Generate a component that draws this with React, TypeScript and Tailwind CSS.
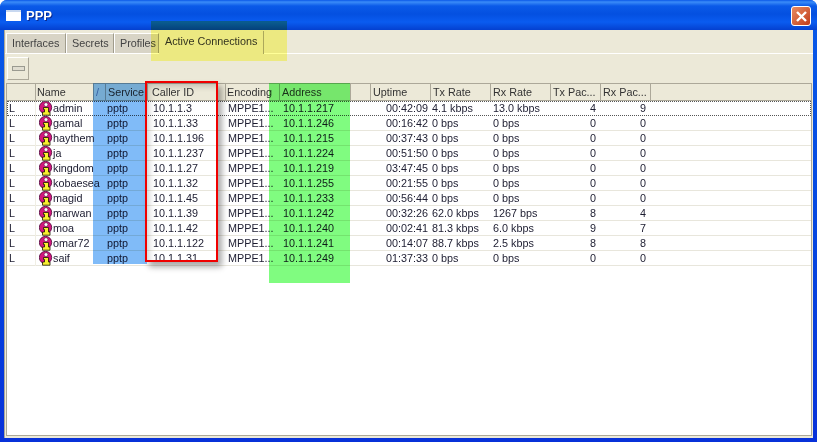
const rows = [
  ['admin', '10.1.1.3', '10.1.1.217', '00:42:09', '4.1 kbps', '13.0 kbps', '4', '9'],
  ['gamal', '10.1.1.33', '10.1.1.246', '00:16:42', '0 bps', '0 bps', '0', '0'],
  ['haythem', '10.1.1.196', '10.1.1.215', '00:37:43', '0 bps', '0 bps', '0', '0'],
  ['ja', '10.1.1.237', '10.1.1.224', '00:51:50', '0 bps', '0 bps', '0', '0'],
  ['kingdom', '10.1.1.27', '10.1.1.219', '03:47:45', '0 bps', '0 bps', '0', '0'],
  ['kobaesea', '10.1.1.32', '10.1.1.255', '00:21:55', '0 bps', '0 bps', '0', '0'],
  ['magid', '10.1.1.45', '10.1.1.233', '00:56:44', '0 bps', '0 bps', '0', '0'],
  ['marwan', '10.1.1.39', '10.1.1.242', '00:32:26', '62.0 kbps', '1267 bps', '8', '4'],
  ['moa', '10.1.1.42', '10.1.1.240', '00:02:41', '81.3 kbps', '6.0 kbps', '9', '7'],
  ['omar72', '10.1.1.122', '10.1.1.241', '00:14:07', '88.7 kbps', '2.5 kbps', '8', '8'],
  ['saif', '10.1.1.31', '10.1.1.249', '01:37:33', '0 bps', '0 bps', '0', '0'],
];

const gridCols = 'grid grid-cols-[29px_58px_12px_42px_78px_54px_71px_20px_60px_60px_60px_50px_50px_1fr]';

const headers = [
  { label: '', pad: 'pl-[2px]' },
  { label: 'Name', pad: 'pl-[1px]' },
  { label: '/', pad: 'pl-[2px] text-[#6a84a8]' },
  { label: 'Service', pad: 'pl-[2px]' },
  { label: 'Caller ID', pad: 'pl-[4px]' },
  { label: 'Encoding', pad: 'pl-[1px]' },
  { label: 'Address', pad: 'pl-[2px]' },
  { label: '', pad: 'pl-[2px]' },
  { label: 'Uptime', pad: 'pl-[2px]' },
  { label: 'Tx Rate', pad: 'pl-[2px]' },
  { label: 'Rx Rate', pad: 'pl-[2px]' },
  { label: 'Tx Pac...', pad: 'pl-[2px]' },
  { label: 'Rx Pac...', pad: 'pl-[2px]' },
  { label: '', pad: 'pl-[2px]' },
];

function UserIcon() {
  return (
    <svg width="14" height="15" viewBox="0 0 14 15" className="shrink-0">
      <circle cx="6.5" cy="6.5" r="6.2" fill="#d4157e" stroke="#4a0a38" strokeWidth="0.8" />
      <circle cx="7" cy="3.6" r="1.9" fill="#fff" stroke="#4a0a38" strokeWidth="0.5" />
      <path d="M4.5 6.5 H9.5 V11 H11 V14.2 H3.5 V11 H5.5 V8.5 H4.5 Z" fill="#f8ee30" stroke="#1a1400" strokeWidth="0.8" />
    </svg>
  );
}

function Tab({ label, width, active }: { label: string; width: string; active?: boolean }) {
  if (active) {
    return (
      <div className={`${width} h-[23px] mt-[1px] pl-[6px] pt-[3px] text-[#333] bg-[#ece9d8] border-r border-[#aca899]`}>{label}</div>
    );
  }
  return (
    <div className={`${width} h-[20px] mt-[3px] pl-[5px] pt-[2px] text-[#444] bg-[#d8d4c6] border-r border-[#a09c8c] border-l border-l-white border-t border-t-white`}>{label}</div>
  );
}

export default function App() {
  return (
    <div className="relative w-[817px] h-[442px] overflow-hidden bg-white text-[10.8px] leading-[15px] text-[#1c1c30] font-['Liberation_Sans',sans-serif]">
      <div className="w-full h-full flex flex-col rounded-t-[7px] bg-gradient-to-b from-[#0a5ae8] to-[#0831d9]">
        {/* title bar */}
        <div className="h-[30px] shrink-0 flex items-center pl-[6px] pr-[6px] rounded-t-[7px] bg-[linear-gradient(to_bottom,#0a58e8_0px,#3a8cf8_2px,#0a5ae8_6px,#0450e0_14px,#0a5cf0_22px,#0440d0_30px)]">
          <div className="w-[15px] h-[11px] bg-white border-t-2 border-[#c8d8f0]" />
          <span className="ml-[5px] text-[13px] font-bold text-white [text-shadow:1px_1px_#0a2a90]">PPP</span>
          <div className="ml-auto mt-[2px] w-[20px] h-[20px] rounded-[3px] border border-white bg-gradient-to-br from-[#e88a60] to-[#c03a18] flex items-center justify-center">
            <svg width="13" height="13" viewBox="0 0 13 13">
              <path d="M2 2 L11 11 M11 2 L2 11" stroke="#fff" strokeWidth="2.4" />
            </svg>
          </div>
        </div>

        {/* body */}
        <div className="flex-1 min-h-0 mx-[4px] mb-[4px] pb-[2px] flex flex-col bg-[#ece9d8] border-l border-[#aca899]">
          {/* tabs */}
          <div className="h-[24px] shrink-0 flex pl-[1px] items-start border-b border-white">
            <Tab label="Interfaces" width="w-[60px]" />
            <Tab label="Secrets" width="w-[48px]" />
            <Tab label="Profiles" width="w-[45px]" />
            <Tab label="Active Connections" width="w-[105px]" active />
          </div>
          {/* toolbar */}
          <div className="h-[29px] shrink-0 flex items-start pl-[2px] pt-[3px]">
            <div className="w-[22px] h-[23px] border border-t-white border-l-white border-r-[#aca899] border-b-[#aca899] flex items-center justify-center">
              <div className="w-[13px] h-[5px] bg-[#e0ddd0] border border-[#9a9a90]" />
            </div>
          </div>
          {/* list */}
          <div className="flex-1 min-h-0 mx-[1px] flex flex-col bg-white border border-[#aca899]">
            <div className={`${gridCols} h-[17px] shrink-0 bg-[#ece9d8] text-[#333] border-b border-[#aca899]`}>
              {headers.map((h, i) => (
                <div key={i} className={`${h.pad} pt-[1px] border-r border-[#aca899] overflow-hidden whitespace-nowrap last:border-r-0`}>{h.label}</div>
              ))}
            </div>
            {rows.map((r, i) => (
              <div key={r[0]} className={`${gridCols} h-[15px] border-b whitespace-nowrap ${i === 0 ? 'border-transparent outline outline-1 outline-dotted outline-[#555] -outline-offset-1' : 'border-[#e8e6dc]'}`}>
                <div className="pl-[2px] border-r border-[#f0eee4]">L</div>
                <div className="col-span-2 flex items-center pl-[3px] overflow-hidden"><UserIcon /><span>{r[0]}</span></div>
                <div className="pl-[1px]">pptp</div>
                <div className="pl-[5px]">{r[1]}</div>
                <div className="pl-[2px]">MPPE1...</div>
                <div className="pl-[3px]">{r[2]}</div>
                <div />
                <div className="text-right pr-[3px]">{r[3]}</div>
                <div className="pl-[1px]">{r[4]}</div>
                <div className="pl-[2px]">{r[5]}</div>
                <div className="text-right pr-[5px]">{r[6]}</div>
                <div className="text-right pr-[5px]">{r[7]}</div>
                <div />
              </div>
            ))}
          </div>
        </div>
      </div>

      {/* annotations painted over the screenshot */}
      <div className="absolute left-[151px] top-[21px] w-[136px] h-[40px] bg-[#ffff98] mix-blend-multiply" />
      <div className="absolute left-[93px] top-[83px] w-[54px] h-[181px] bg-[#80bbf8] mix-blend-multiply" />
      <div className="absolute left-[269px] top-[83px] w-[81px] h-[200px] bg-[#80fc80] mix-blend-multiply" />
      <div className="absolute left-[145px] top-[81px] w-[73px] h-[181px] border-[2px] border-[#f00000] shadow-[4px_5px_6px_#00000055,inset_4px_5px_6px_-2px_#00000033]" />
    </div>
  );
}
